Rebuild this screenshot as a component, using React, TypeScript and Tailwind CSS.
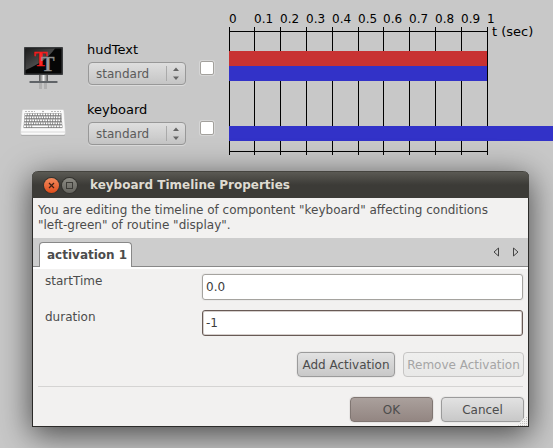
import { useId, useState } from 'react';

const TICKS = [
  { x: 0, label: '0' },
  { x: 25, label: '0.1' },
  { x: 51, label: '0.2' },
  { x: 77, label: '0.3' },
  { x: 103, label: '0.4' },
  { x: 129, label: '0.5' },
  { x: 154, label: '0.6' },
  { x: 180, label: '0.7' },
  { x: 206, label: '0.8' },
  { x: 232, label: '0.9' },
  { x: 258, label: '1' },
];

function MonitorIcon() {
  return (
    <svg viewBox="0 0 48 48" className="size-12 shrink-0" aria-hidden="true">
      <defs>
        <linearGradient id="screen" x1="0" y1="0" x2="1" y2="1">
          <stop offset="0" stopColor="#1c1c1c" />
          <stop offset="1" stopColor="#707070" />
        </linearGradient>
        <linearGradient id="stand" x1="0" y1="0" x2="1" y2="0">
          <stop offset="0" stopColor="#555" />
          <stop offset="0.3" stopColor="#aaa" />
          <stop offset="0.5" stopColor="#eee" />
          <stop offset="0.7" stopColor="#aaa" />
          <stop offset="1" stopColor="#555" />
        </linearGradient>
      </defs>
      <rect x="19" y="42" width="3" height="6" fill="#999" opacity="0.5" />
      <rect x="24" y="42" width="3" height="6" fill="#999" opacity="0.5" />
      <rect x="19" y="34" width="9" height="7" fill="url(#stand)" />
      <rect x="9.500" y="40" width="28" height="2" rx="0.500" fill="#606468" />
      <rect x="4" y="6" width="39" height="28" rx="0.800" fill="#3b3d3f" />
      <rect x="5.500" y="7.500" width="36" height="25" fill="#060606" />
      <path d="M5.500 7.500H35C28 17 18 24 5.500 29Z" fill="url(#screen)" />
      <text x="14" y="24.500" fontSize="20" fontWeight="700" className="font-['Liberation_Serif',serif]">
        <tspan fill="#ff2626" stroke="#e01010" strokeWidth="0.500">T</tspan>
        <tspan dx="-6" dy="5" fill="#999" stroke="#777" strokeWidth="0.300">T</tspan>
      </text>
    </svg>
  );
}

function KeyboardIcon() {
  const rows = [13.4, 16.4, 19.4, 22.4, 25.4];
  return (
    <svg viewBox="0 0 48 48" className="size-12 shrink-0" aria-hidden="true">
      <path d="M1 32.500L1.500 34.800H44.500L45 32.500Z" fill="#888" opacity="0.7" />
      <path d="M3 8.500H43Q44 8.500 44 10L45.500 31Q45.500 34 44 34H2Q0.500 34 0.500 31L2 10Q2 8.500 3 8.500Z" fill="#fafafa" stroke="#c4c4c4" strokeWidth="0.500" />
      <path d="M1 31H45" stroke="#c8c8c8" strokeWidth="0.700" />
      <path d="M5 10.500H15M31 10.500H41" stroke="#aaa" strokeWidth="0.800" strokeDasharray="2 1" />
      <circle cx="23" cy="10.500" r="0.800" fill="#999" />
      {rows.map((y, i) => (
        <g key={y}>
          <rect x={4.6 - i * 0.25} y={y - 1.2} width={36.8 + i * 0.5} height="2.900" fill="#777" />
          <path d={`M${5 - i * 0.25} ${y}H${41 + i * 0.25}`} stroke="#fff" strokeWidth="1.700" strokeDasharray={i === 4 ? '2 .7 2 .7 2 .7 16 .7 2 .7' : i % 2 ? '1.6 .8' : '1.8 .8'} />
        </g>
      ))}
    </svg>
  );
}

function ComponentRow({ name, icon }: { name: string; icon: React.ReactNode }) {
  const id = useId();
  return (
    <div className="flex h-[60px] items-start">
      <div className="pt-px">{icon}</div>
      <div className="ml-5 w-[98px]">
        <label htmlFor={id} className="-ml-px block text-[13px] leading-5 text-black">{name}</label>
        <div className="relative mt-0.5">
          <select
            id={id}
            defaultValue="standard"
            className="block h-[23px] w-full appearance-none rounded border border-[#989898] bg-linear-to-b from-[#dedede] to-[#c5c5c5] pl-[7px] text-xs text-[#5b5b5b] shadow-[0_1px_0_#dcdcdc]"
          >
            <option>standard</option>
          </select>
          <svg viewBox="0 0 20 15" className="pointer-events-none absolute top-1 right-0 h-[15px] w-5" aria-hidden="true">
            <path d="M0.500 0V15" stroke="#aaa" />
            <path d="M7 5L10 1.500L13 5ZM7 10.500L10 14L13 10.500Z" fill="#666" />
          </svg>
        </div>
      </div>
      <input
        type="checkbox"
        aria-label={`Select ${name}`}
        className="mt-[21px] ml-3.5 size-3.5 appearance-none rounded-xs border border-[#a3a19d] bg-white shadow-[0_0_0_1px_#d6d6d6] checked:bg-[#666]"
      />
    </div>
  );
}

function Timeline() {
  return (
    <svg className="h-[171px] min-w-0 flex-1" role="img" aria-label="Timeline in seconds">
      <g shapeRendering="crispEdges">
        {TICKS.map(({ x }) => (
          <rect key={x} x={x} y="27" width="1" height="128" />
        ))}
        <rect y="31" width="258" height="1" />
        <rect y="151" width="258" height="1" />
        <rect y="51" width="258" height="15" fill="#c83232" />
        <rect y="66" width="258" height="15" fill="#3232c8" />
        <rect y="126" width="100%" height="15" fill="#3232c8" />
      </g>
      {TICKS.map(({ x, label }) => (
        <text key={x} x={x} y="23" className="text-xs">{label}</text>
      ))}
      <text x="263" y="36" className="text-[13px]">t (sec)</text>
    </svg>
  );
}

const BUTTON = 'h-[25px] rounded border text-xs text-[#4c4c4c] border-[#9b9b9b] bg-linear-to-b from-[#e2e2e2] to-[#c8c8c8] shadow-[0_0_0_1px_#e9e8e7]';

function PropertiesDialog() {
  const [start, setStart] = useState('0.0');
  const [duration, setDuration] = useState('-1');
  return (
    <section
      role="dialog"
      aria-labelledby="dialog-title"
      className="relative mr-6 ml-8 rounded-t-md border border-t-0 border-[#2c2b29] bg-[#f2f1f0] text-xs text-[#4c4c4c] shadow-[0_7px_32px_1px_rgba(0,0,0,0.64)]"
    >
      <header className="-mx-px flex h-[27px] items-center rounded-t-md border-t border-[#45443f] bg-linear-to-b from-[#5b5a54] to-[#3c3b37] to-50% pl-3">
        <button type="button" aria-label="Close" className="size-[15px] rounded-full bg-linear-to-b from-[#f28a5c] to-[#df4b16] shadow-[0_0_0_1px_#34332f]">
          <svg viewBox="0 0 15 15" className="size-full" aria-hidden="true"><path d="M5 5L10 10M10 5L5 10" stroke="#3c2015" strokeWidth="1.200" /></svg>
        </button>
        <button type="button" aria-label="Maximize" className="ml-[3px] size-[15px] rounded-full bg-linear-to-b from-[#8b8a83] to-[#66655f] shadow-[0_0_0_1px_#34332f]">
          <svg viewBox="0 0 15 15" className="size-full" aria-hidden="true"><rect x="4.500" y="4.500" width="6" height="6" fill="none" stroke="#3c3b37" /></svg>
        </button>
        <h1 id="dialog-title" className="ml-[13px] font-bold text-[#dfdbd2]">keyboard Timeline Properties</h1>
      </header>

      <p className="min-h-10 pt-[5px] pr-3 pb-[5px] pl-[5px] leading-[15px]">
        You are editing the timeline of compontent "keyboard" affecting conditions "left-green" of routine "display".
      </p>

      <div className="flex h-[29px] items-end justify-between border-b border-[#888] bg-[#cdcdcd] pr-2 pl-1.5">
        <div role="tablist">
          <button type="button" role="tab" aria-selected="true" className="-mb-px block h-[25px] rounded-t border border-b-0 border-[#888] bg-white pr-1 pl-[7px] font-bold">
            activation 1
          </button>
        </div>
        <div className="flex gap-[11px] pb-[9px]">
          <button type="button" aria-label="Previous tab">
            <svg viewBox="0 0 8 10" className="h-2.5 w-2" aria-hidden="true"><path d="M5.500 1V9L1 5Z" fill="none" stroke="#444" /></svg>
          </button>
          <button type="button" aria-label="Next tab">
            <svg viewBox="0 0 8 10" className="h-2.5 w-2" aria-hidden="true"><path d="M1.500 1V9L6 5Z" fill="none" stroke="#444" /></svg>
          </button>
        </div>
      </div>

      <form className="border-t-2 border-white" onSubmit={(e) => e.preventDefault()}>
        <div className="flex flex-col gap-2.5 pt-[5px] pr-[5px] pl-3">
          <div className="flex">
            <label htmlFor="start" className="w-[157px] leading-[15px]">startTime</label>
            <input id="start" value={start} onChange={(e) => setStart(e.target.value)} className="h-[26px] min-w-0 flex-1 rounded-[3px] border border-[#a5a39f] bg-white px-[3px] text-[#3c3c3c] shadow-[0_0_0_1px_#eae9e8] outline-none" />
          </div>
          <div className="flex">
            <label htmlFor="duration" className="w-[157px] leading-[15px]">duration</label>
            <input id="duration" value={duration} onChange={(e) => setDuration(e.target.value)} className="h-[26px] min-w-0 flex-1 rounded-[3px] border border-[#685a55] bg-white px-[3px] text-[#3c3c3c] shadow-[inset_0_0_0_1px_#d5cfcc] outline-none" />
          </div>
        </div>
        <div className="flex justify-end gap-2 pt-4 pr-1">
          <button type="button" className={`${BUTTON} w-[98px]`}>Add Activation</button>
          <button type="button" disabled className="h-[25px] w-[121px] rounded border border-[#c6c5c4] bg-linear-to-b from-[#efefee] to-[#e8e8e7] text-xs text-[#a5a5a5]">Remove Activation</button>
        </div>
        <hr className="mx-[5px] mt-[9px] border-[#d5d4d3]" />
        <div className="flex justify-end gap-2 pt-2.5 pr-1 pb-1">
          <button type="submit" className="h-[25px] w-[83px] rounded border border-[#807672] bg-linear-to-b from-[#aaa09c] to-[#938682] text-xs text-[#4c4c4c] shadow-[0_0_0_1px_#e6e4e3]">OK</button>
          <button type="button" className={`${BUTTON} w-[83px]`}>Cancel</button>
        </div>
      </form>

      <svg viewBox="0 0 12 12" className="absolute right-0 bottom-0 size-3" aria-hidden="true">
        <path d="M12 0V12H0Z" fill="#f2f1f0" />
        <path d="M10 3.500h1M8 5.500h1M10 5.500h1M6 7.500h1M8 7.500h1M10 7.500h1M4 9.500h1M6 9.500h1M8 9.500h1M10 9.500h1M2 11.500h1M4 11.500h1M6 11.500h1M8 11.500h1M10 11.500h1" stroke="#c4c2c0" />
      </svg>
    </section>
  );
}

export default function App() {
  return (
    <main className="min-h-screen overflow-hidden bg-[#c8c8c8] font-['DejaVu_Sans',sans-serif]">
      <div className="flex">
        <div className="w-[229px] shrink-0 pt-10 pl-5">
          <ComponentRow name="hudText" icon={<MonitorIcon />} />
          <ComponentRow name="keyboard" icon={<KeyboardIcon />} />
        </div>
        <Timeline />
      </div>
      <PropertiesDialog />
    </main>
  );
}
